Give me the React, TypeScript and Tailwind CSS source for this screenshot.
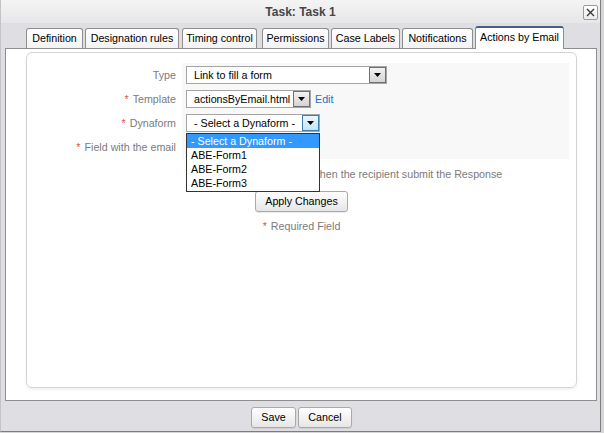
const tabs = [
  { label: 'Definition', w: 'w-[57px]', ml: 'ml-0' },
  { label: 'Designation rules', w: 'w-[94px]', ml: 'ml-[2px]' },
  { label: 'Timing control', w: 'w-[75px]', ml: 'ml-[3px]' },
  { label: 'Permissions', w: 'w-[67px]', ml: 'ml-[5px]' },
  { label: 'Case Labels', w: 'w-[69px]', ml: 'ml-[2px]' },
  { label: 'Notifications', w: 'w-[71px]', ml: 'ml-[2px]' },
];

function Arrow({ focused }: { focused?: boolean }) {
  return (
    <div
      className={
        focused
          ? 'w-[17px] h-[16px] border border-[#3c7fb1] bg-gradient-to-b from-[#eaf6fd] to-[#c4e4f8] flex items-center justify-center'
          : 'w-[17px] h-[16px] border border-[#707070] bg-gradient-to-b from-[#f2f2f2] to-[#d4d4d4] flex items-center justify-center'
      }
    >
      <svg width="7" height="4" viewBox="0 0 7 4">
        <path d="M0 0h7L3.5 4z" fill="#000" />
      </svg>
    </div>
  );
}

function Select({ value, w, focused }: { value: string; w: string; focused?: boolean }) {
  return (
    <div className={`${w} h-[18px] border border-[#a5a5a5] bg-white flex items-center justify-between pl-[7px] pr-0`}>
      <span className="text-black whitespace-nowrap">{value}</span>
      <Arrow focused={focused} />
    </div>
  );
}

function Label({ text, req }: { text: string; req?: boolean }) {
  return (
    <div className="h-[24px] flex items-center justify-end pr-[6px] text-[#7b7b7b] whitespace-nowrap">
      {req && <span className="text-[#e65050] mr-[4px]">*</span>}
      {text}
    </div>
  );
}

function Btn({ children, w }: { children: string; w: string }) {
  return (
    <button className={`${w} h-[21px] rounded-[3px] border border-[#a9a9a9] bg-gradient-to-b from-white to-[#e6e6e6] text-black shadow-[0_1px_1px_rgba(0,0,0,0.08)]`}>
      {children}
    </button>
  );
}

export default function App() {
  return (
    <div className="w-[604px] h-[433px] bg-[#d6d6d9] text-[10.7px] font-['Liberation_Sans',Arial,sans-serif]">
      <div className="w-[601px] h-[432px] bg-[#dfdee3] border-l border-l-[#c4c4c4] border-r border-r-[#7d7d7d] border-b border-b-[#7d7d7d] flex flex-col">
        {/* Title bar */}
        <div className="h-[23px] relative flex items-center justify-center bg-gradient-to-b from-[#f4f4f4] to-[#e7e7e9]">
          <span className="text-[12px] font-bold text-[#454545]">Task: Task 1</span>
          <div className="absolute left-[582px] top-[5px] w-[15px] h-[15px] border border-[#9a9a9a] rounded-[2px] bg-gradient-to-b from-white to-[#ececec] flex items-center justify-center">
            <svg width="9" height="9" viewBox="0 0 9 9">
              <path d="M1 1L8 8M8 1L1 8" stroke="#3a3a3a" strokeWidth="1.4" />
            </svg>
          </div>
        </div>

        {/* Tabs */}
        <div className="h-[25px] flex items-end pl-[25px]">
          {tabs.map((t) => (
            <div
              key={t.label}
              className={`${t.w} ${t.ml} h-[20px] border border-[#8e8e8e] border-b-0 rounded-t-[3px] bg-gradient-to-b from-white to-[#f3f3f3] flex items-center justify-center text-black whitespace-nowrap`}
            >
              {t.label}
            </div>
          ))}
          <div className="w-[89px] ml-[2px] h-[23px] -mb-px relative z-10 border border-[#8e8e8e] border-t-2 border-t-[#41618f] border-b-0 rounded-t-[3px] bg-white flex items-center justify-center text-black whitespace-nowrap pb-[2px]">
            Actions by Email
          </div>
        </div>

        {/* Panel */}
        <div className="ml-[4px] w-[592px] h-[353px] border border-[#8e8e8e] bg-white pt-[3px] pl-[20px]">
          <div className="w-[551px] h-[336px] border border-[#d4d4d4] rounded-[6px] shadow-[0_2px_3px_rgba(0,0,0,0.06)] pt-[10px] relative">
            <div className="flex">
              <div className="w-[155px]">
                <Label text="Type" />
                <Label text="Template" req />
                <Label text="Dynaform" req />
                <Label text="Field with the email" req />
              </div>
              <div className="w-[387px] bg-[#f8f8f8] pl-[4px]">
                <div className="h-[24px] flex items-center">
                  <Select value="Link to fill a form" w="w-[201px]" />
                </div>
                <div className="h-[24px] flex items-center">
                  <Select value="actionsByEmail.html" w="w-[125px]" />
                  <span className="ml-[4px] text-[#1e72bd]">Edit</span>
                </div>
                <div className="h-[24px] flex items-center">
                  <Select value="- Select a Dynaform -" w="w-[134px]" focused />
                </div>
                <div className="h-[24px] flex items-center">
                  <Select value="" w="w-[120px]" />
                </div>
              </div>
            </div>

            <div className="mt-[8px] h-[14px] pl-[159px] flex items-center text-[#7b7b7b] whitespace-nowrap">
              <input type="checkbox" className="w-[13px] h-[13px] m-0" />
              <span className="ml-[8px]">Register a Case Note when the recipient submit the Response</span>
            </div>

            <div className="mt-[10px] flex justify-center">
              <Btn w="w-[93px]">Apply Changes</Btn>
            </div>

            <div className="mt-[7px] h-[14px] flex items-center justify-center text-[#7b7b7b]">
              <span className="text-[#e65050] mr-[4px]">*</span>Required Field
            </div>

            {/* Open dropdown list */}
            <div className="absolute left-[159px] top-[80px] w-[134px] h-[59px] border border-[#333] bg-white text-black">
              <div className="h-[14px] bg-[#3399ff] text-white pl-[4px] flex items-center">- Select a Dynaform -</div>
              <div className="h-[14px] pl-[4px] flex items-center">ABE-Form1</div>
              <div className="h-[14px] pl-[4px] flex items-center">ABE-Form2</div>
              <div className="h-[14px] pl-[4px] flex items-center">ABE-Form3</div>
            </div>
          </div>
        </div>

        {/* Footer buttons */}
        <div className="mt-[6px] flex justify-center gap-[2px] pl-[2px]">
          <Btn w="w-[45px]">Save</Btn>
          <Btn w="w-[54px]">Cancel</Btn>
        </div>
      </div>
    </div>
  );
}
